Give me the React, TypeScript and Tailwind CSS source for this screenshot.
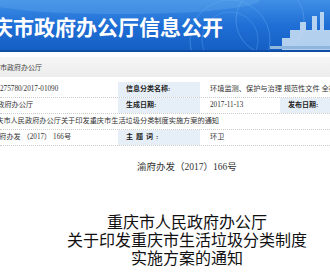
const cjk = { fontFamily: '"Liberation Serif", "Noto Sans CJK SC", serif' };
const hei = { fontFamily: '"Noto Sans CJK SC", "Liberation Sans", sans-serif' };

function Banner() {
  return (
    <div className="relative h-[52px] overflow-hidden bg-gradient-to-b from-[#3f8fe6] via-[#1f6fd6] to-[#155fc4] border-b-2 border-[#0f4fa8]">
      <svg className="absolute inset-0" width="330" height="52" viewBox="0 0 330 52">
        <circle cx="230" cy="40" r="40" fill="none" stroke="#5aa3ee" strokeWidth="1" opacity="0.5" />
        <circle cx="230" cy="40" r="28" fill="none" stroke="#5aa3ee" strokeWidth="1" opacity="0.4" />
        <circle cx="270" cy="20" r="34" fill="none" stroke="#6fb0f0" strokeWidth="1" opacity="0.4" />
        <ellipse cx="120" cy="0" rx="140" ry="14" fill="#6aaef0" opacity="0.3" />
        <g fill="#cfe3f5" opacity="0.85">
          <rect x="290" y="30" width="40" height="22" />
          <rect x="300" y="22" width="6" height="10" />
          <rect x="312" y="16" width="5" height="16" />
          <rect x="320" y="12" width="4" height="20" />
          <rect x="282" y="38" width="12" height="14" />
        </g>
        <rect x="270" y="46" width="60" height="3" fill="#8fb7dd" />
      </svg>
      <div
        className="relative ml-[-29px] pt-[14px] text-[21px] font-bold leading-[24px] text-white whitespace-nowrap"
        style={hei}
      >
        重庆市政府办公厅信息公开
      </div>
    </div>
  );
}

function Label({ children }: { children: React.ReactNode }) {
  return (
    <div className="flex items-center bg-[#e6eff8] pl-[8px] text-[7px] font-bold text-[#222]">
      {children}
    </div>
  );
}

export default function App() {
  return (
    <div className="w-[330px] h-[280px] overflow-hidden bg-white" style={cjk}>
      <Banner />
      <div className="mt-[5px] h-[20px] bg-gradient-to-b from-[#f6f6f6] to-[#ececec] flex items-center overflow-hidden">
        <span className="ml-[-14px] text-[7px] text-[#444] pt-[2px] whitespace-nowrap">重庆市政府办公厅</span>
      </div>

      <div className="mt-[5px] text-[7.2px] text-[#333] overflow-hidden">
        <div className="grid grid-cols-[118px_82px_80px_50px] h-[16px] border-b border-dotted border-[#ccc]">
          <div className="flex items-center">275780/2017-01090</div>
          <Label>信息分类名称:</Label>
          <div className="col-span-2 flex items-center pl-[10px] whitespace-nowrap overflow-hidden">
            环境监测、保护与治理 规范性文件 全社会
          </div>
        </div>
        <div className="grid grid-cols-[118px_82px_80px_50px] h-[16px] border-b border-dotted border-[#ccc]">
          <div className="flex items-center overflow-hidden whitespace-nowrap">
            <span className="ml-[-10px]">市政府办公厅</span>
          </div>
          <Label>生成日期:</Label>
          <div className="flex items-center pl-[10px]">2017-11-13</div>
          <Label>发布日期:</Label>
        </div>
        <div className="h-[16px] flex items-center border-b border-dotted border-[#ccc] whitespace-nowrap overflow-hidden">
          <span className="ml-[-11px]">重庆市人民政府办公厅关于印发重庆市生活垃圾分类制度实施方案的通知</span>
        </div>
        <div className="grid grid-cols-[118px_82px_80px_50px] h-[16px] border-b border-dotted border-[#ccc]">
          <div className="flex items-center whitespace-nowrap overflow-hidden">
            <span className="ml-[-8px]">渝府办发 （2017） 166号</span>
          </div>
          <div className="flex items-center bg-[#e6eff8] pl-[8px] text-[7px] font-bold text-[#222] tracking-[3px]">主题词:</div>
          <div className="flex items-center pl-[10px]">环卫</div>
          <div />
        </div>
      </div>

      <div className="mt-[14px] pl-[44px] text-center text-[9.5px] text-[#333]">渝府办发（2017）166号</div>

      <div
        className="mt-[38px] pl-[44px] text-center text-[16px] leading-[18px] text-[#111]"
        style={hei}
      >
        <div>重庆市人民政府办公厅</div>
        <div>关于印发重庆市生活垃圾分类制度</div>
        <div>实施方案的通知</div>
      </div>
    </div>
  );
}
